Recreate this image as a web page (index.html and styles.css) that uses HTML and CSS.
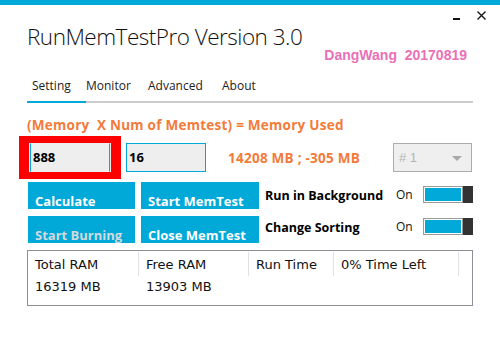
FILE: index.html
```html
<!doctype html>
<html>
<head>
   <title>RunMemTestPro Version 3.0</title>
   <meta charset="utf-8">
   <link rel="stylesheet" href="styles.css">
</head>
<body>

   <div class="topbar"></div>

   <div class="caption">
      <svg class="min" width="7" height="2" viewBox="0 0 7 2"><rect width="7" height="2" fill="#111"/></svg>
      <svg class="close" width="9" height="9" viewBox="0 0 9 9"><path d="M0.5 0.5 L8.5 8.5 M8.5 0.5 L0.5 8.5" stroke="#111" stroke-width="1.3" fill="none"/></svg>
   </div>

   <h1>RunMemTestPro Version 3.0</h1>
   <p class="sig">DangWang&nbsp; 20170819</p>

   <ul class="tabs">
      <li class="active">Setting</li>
      <li class="t2">Monitor</li>
      <li class="t3">Advanced</li>
      <li>About</li>
   </ul>

   <div class="pane">
      <p class="formula">(Memory&nbsp; X Num of Memtest) = Memory Used</p>

      <div class="inputs">
         <div class="hl"><div class="field">888</div></div>
         <div class="field">16</div>
         <span class="result">14208 MB ; -305 MB</span>
         <div class="select">
            <span># 1</span>
            <svg width="10" height="5" viewBox="0 0 10 5"><path d="M0 0 H10 L5 5 Z" fill="#a9a9a9"/></svg>
         </div>
      </div>

      <div class="actions">
         <button>Calculate</button>
         <button>Start MemTest</button>
         <div class="opt">
            <span class="label">Run in Background</span>
            <span class="on">On</span>
            <span class="toggle"><i></i></span>
         </div>
         <button class="off">Start Burning</button>
         <button>Close MemTest</button>
         <div class="opt second">
            <span class="label">Change Sorting</span>
            <span class="on">On</span>
            <span class="toggle"><i></i></span>
         </div>
      </div>

      <div class="stats">
         <div class="row head">
            <span class="c1">Total RAM</span>
            <span class="c2">Free RAM</span>
            <span class="c3">Run Time</span>
            <span class="c4">0% Time Left</span>
            <span class="c5"></span>
         </div>
         <div class="row">
            <span class="c1">16319 MB</span>
            <span class="c2">13903 MB</span>
         </div>
      </div>
   </div>

</body>
</html>
```

FILE: styles.css
```css
body{
   margin: 0;
   background: #fff;
   font-family: "Open Sans", "Noto Sans", sans-serif;
   color: #000;
}

.topbar{
   height: 5px;
   background: #01a9d8;
}

/* window buttons */
.caption{
   display: flex;
   justify-content: flex-end;
   align-items: flex-end;
   gap: 17px;
   height: 9px;
   padding: 6px 14px 0 0;
}
.caption svg{
   display: block;
}

h1{
   margin: 5px 0 0 27px;
   font-size: 22.5px;
   font-weight: 300;
   letter-spacing: -0.5px;
   line-height: 24px;
   color: #111;
}

.sig{
   margin: 0;
   padding-right: 33px;
   text-align: right;
   font-family: "Liberation Sans", Arial, sans-serif;
   font-weight: bold;
   font-size: 14px;
   line-height: 12px;
   color: #ea70b6;
}

.tabs{
   display: flex;
   list-style: none;
   margin: 17px 0 0 27px;
   padding: 0;
   width: 446px;
   border-bottom: 2px solid #cccccc;
}
.tabs li{
   font-size: 12px;
   line-height: 16px;
   padding-bottom: 7px;
   color: #222;
}
.tabs .active{
   width: 59px;
   box-sizing: border-box;
   padding-left: 5px;
   border-bottom: 2px solid #01a9d8;
   margin-bottom: -2px;
}
.tabs .t2{
   width: 62px;
}
.tabs .t3{
   width: 74px;
}

.pane{
   margin-left: 27px;
   width: 446px;
}

.formula,
.result{
   font-weight: bold;
   font-size: 13.5px;
   letter-spacing: 0.25px;
   color: #f37b3a;
}
.formula{
   margin: 14px 0 0;
   line-height: 16px;
}

.inputs{
   display: flex;
   align-items: center;
   margin-top: 3px;
   height: 43px;
}
.hl{
   margin-left: -8px;
   border: 7px solid #ff0000;
   border-width: 7px 10px;
   padding: 0 1px;
   background: #ececec;
}
.field{
   box-sizing: border-box;
   width: 80px;
   height: 29px;
   padding-left: 2px;
   border: 1px solid #01a9d8;
   background: #eeeeee;
   font-weight: bold;
   font-size: 13px;
   line-height: 27px;
}
.hl .field{
   border-top-color: #ececec;
   border-bottom-color: #ececec;
}
.inputs > .field{
   margin-left: 5px;
}
.result{
   margin-left: 22px;
}
.select{
   display: flex;
   justify-content: space-between;
   align-items: center;
   box-sizing: border-box;
   margin-left: auto;
   margin-right: 1px;
   width: 79px;
   height: 29px;
   padding: 0 9px 0 5px;
   border: 1px solid #acacac;
   background: #efefef;
   font-family: "Liberation Sans", Arial, sans-serif;
   font-size: 13px;
   color: #b5b5b5;
}
.select svg{
   display: block;
   margin-top: 2px;
}

.actions{
   display: grid;
   grid-template-columns: 107px 118px 1fr;
   grid-auto-rows: 27px;
   column-gap: 6px;
   row-gap: 7px;
   margin: 3px 0 0 1px;
}
.actions button{
   display: block;
   box-sizing: border-box;
   height: 27px;
   padding: 10px 0 0 7px;
   border: 0;
   background: #01a9d8;
   color: #fff;
   text-align: left;
   font-family: "Open Sans", "Noto Sans", sans-serif;
   font-weight: bold;
   font-size: 13px;
   line-height: 16px;
}
.actions button.off{
   color: #d3dadd;
}

.opt{
   display: flex;
   align-items: flex-start;
   padding-top: 4px;
}
.opt.second{
   padding-top: 2px;
}
.opt .label{
   flex: 1;
   margin-top: 2px;
   font-weight: bold;
   font-size: 12.5px;
   line-height: 16px;
}
.opt .on{
   width: 27px;
   margin-top: 1px;
   font-size: 12px;
   line-height: 16px;
   color: #111;
}
.toggle{
   display: flex;
   width: 50px;
   height: 17px;
}
.toggle::before{
   content: "";
   box-sizing: border-box;
   width: 40px;
   border: 1px solid #9a9a9a;
   box-shadow: inset 0 0 0 1px #fff;
   background: #01a9d8;
}
.toggle i{
   width: 10px;
   background: #333;
}

.stats{
   box-sizing: border-box;
   margin-top: 7px;
   width: 446px;
   height: 56px;
   border: 1px solid #8d8d95;
   font-family: "DejaVu Sans", Verdana, sans-serif;
   font-size: 13px;
   line-height: 16px;
   color: #111;
}
.stats .row{
   display: flex;
}
.stats .row span{
   box-sizing: border-box;
   padding-left: 7px;
}
.stats .head{
   padding-top: 1px;
}
.stats .head span{
   height: 24px;
   padding-top: 5px;
   border-right: 1px solid #e2e2e2;
}
.stats .row:not(.head){
   padding-top: 3px;
}
.stats .c1{ width: 111px; }
.stats .c2{ width: 110px; }
.stats .c3{ width: 85px; }
.stats .c4{ width: 125px; }
.stats .head .c5{ border-right: 0; }
```
